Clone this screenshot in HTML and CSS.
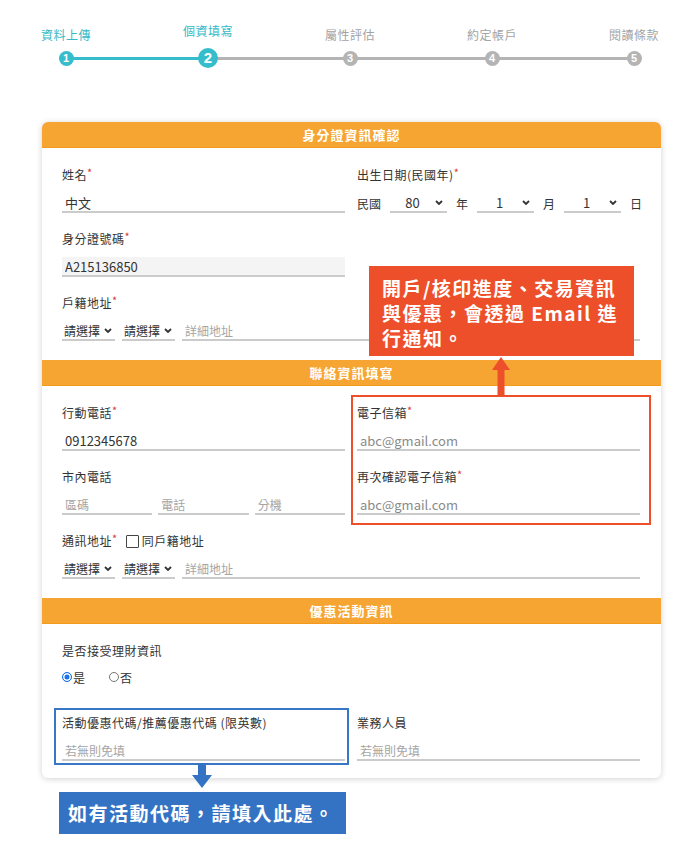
FILE: index.html
```html
<!DOCTYPE html>
<html>
<head>
    <meta charset="utf-8">
    <title>開戶 - 個資填寫</title>
    <link rel="stylesheet" href="styles.css">
</head>
<body>
    <div class="stepper">
        <div class="step-labels">
            <span class="done">資料上傳</span>
            <span class="done current">個資填寫</span>
            <span>屬性評估</span>
            <span>約定帳戶</span>
            <span>閱讀條款</span>
        </div>
        <div class="step-dots">
            <span class="dot-box"><span class="dot done">1</span></span>
            <span class="dot-box"><span class="dot done current">2</span></span>
            <span class="dot-box"><span class="dot">3</span></span>
            <span class="dot-box"><span class="dot">4</span></span>
            <span class="dot-box"><span class="dot">5</span></span>
        </div>
    </div>

    <div class="card">
        <div class="sec-head first">身分證資訊確認</div>
        <div class="sec-body">
            <div class="row">
                <div class="field">
                    <div class="label">姓名<span class="req">*</span></div>
                    <div class="ctl"><input class="input" value="中文"></div>
                </div>
                <div class="field">
                    <div class="label">出生日期(民國年)<span class="req">*</span></div>
                    <div class="ctl date-row">
                        <span>民國</span>
                        <div class="select date"><span class="sel-text">80</span><svg width="8" height="5" viewBox="0 0 8 5"><polyline points="1,1 4,4 7,1" fill="none" stroke="#333" stroke-width="1.8"/></svg></div>
                        <span>年</span>
                        <div class="select date"><span class="sel-text">1</span><svg width="8" height="5" viewBox="0 0 8 5"><polyline points="1,1 4,4 7,1" fill="none" stroke="#333" stroke-width="1.8"/></svg></div>
                        <span>月</span>
                        <div class="select date"><span class="sel-text">1</span><svg width="8" height="5" viewBox="0 0 8 5"><polyline points="1,1 4,4 7,1" fill="none" stroke="#333" stroke-width="1.8"/></svg></div>
                        <span>日</span>
                    </div>
                </div>
            </div>
            <div class="row">
                <div class="field">
                    <div class="label">身分證號碼<span class="req">*</span></div>
                    <div class="ctl"><input class="input readonly" value="A215136850" readonly></div>
                </div>
            </div>
            <div class="field">
                <div class="label">戶籍地址<span class="req">*</span></div>
                <div class="ctl">
                    <div class="select addr">請選擇<svg width="8" height="5" viewBox="0 0 8 5"><polyline points="1,1 4,4 7,1" fill="none" stroke="#333" stroke-width="1.8"/></svg></div>
                    <div class="select addr">請選擇<svg width="8" height="5" viewBox="0 0 8 5"><polyline points="1,1 4,4 7,1" fill="none" stroke="#333" stroke-width="1.8"/></svg></div>
                    <input class="input" placeholder="詳細地址">
                </div>
            </div>
        </div>

        <div class="sec-head">聯絡資訊填寫</div>
        <div class="sec-body">
            <div class="row">
                <div class="stack">
                    <div class="field">
                        <div class="label">行動電話<span class="req">*</span></div>
                        <div class="ctl"><input class="input" value="0912345678"></div>
                    </div>
                    <div class="field">
                        <div class="label">市內電話</div>
                        <div class="ctl phone">
                            <input class="input" placeholder="區碼">
                            <input class="input" placeholder="電話">
                            <input class="input" placeholder="分機">
                        </div>
                    </div>
                </div>
                <div class="stack hl-red">
                    <svg class="arrow-red" width="18" height="40" viewBox="0 0 18 40"><polygon points="9,0 18,13 12.5,13 12.5,40 5.5,40 5.5,13 0,13" fill="#ee4f2b"/></svg>
                    <div class="field">
                        <div class="label">電子信箱<span class="req">*</span></div>
                        <div class="ctl"><input class="input ph-dark" placeholder="abc@gmail.com"></div>
                    </div>
                    <div class="field">
                        <div class="label">再次確認電子信箱<span class="req">*</span></div>
                        <div class="ctl"><input class="input ph-dark" placeholder="abc@gmail.com"></div>
                    </div>
                </div>
            </div>
            <div class="field">
                <div class="label">通訊地址<span class="req">*</span><span class="check"></span>同戶籍地址</div>
                <div class="ctl">
                    <div class="select addr">請選擇<svg width="8" height="5" viewBox="0 0 8 5"><polyline points="1,1 4,4 7,1" fill="none" stroke="#333" stroke-width="1.8"/></svg></div>
                    <div class="select addr">請選擇<svg width="8" height="5" viewBox="0 0 8 5"><polyline points="1,1 4,4 7,1" fill="none" stroke="#333" stroke-width="1.8"/></svg></div>
                    <input class="input" placeholder="詳細地址">
                </div>
            </div>
        </div>

        <div class="sec-head">優惠活動資訊</div>
        <div class="sec-body promo">
            <div class="field">
                <div class="label">是否接受理財資訊</div>
                <div class="radio-row">
                    <span class="radio-opt"><span class="radio on"></span>是</span>
                    <span class="radio-opt"><span class="radio"></span>否</span>
                </div>
            </div>
            <div class="row">
                <div class="field hl-blue">
                    <div class="label">活動優惠代碼/推薦優惠代碼 (限英數)</div>
                    <div class="ctl"><input class="input" placeholder="若無則免填"></div>
                    <svg class="arrow-blue" width="20" height="25" viewBox="0 0 20 25"><polygon points="6,0 14,0 14,12 20,12 10,25 0,12 6,12" fill="#3473c3"/></svg>
                </div>
                <div class="field">
                    <div class="label">業務人員</div>
                    <div class="ctl"><input class="input" placeholder="若無則免填"></div>
                </div>
            </div>
        </div>

        <div class="note-red">開戶/核印進度、交易資訊<br>與優惠，會透過 Email 進<br>行通知。</div>
    </div>

    <div class="note-blue">如有活動代碼，請填入此處。</div>
</body>
</html>
```

FILE: styles.css
```css
body {
    margin: 0;
    background: #fff;
    color: #333;
    font-family: "Noto Sans CJK TC", "Noto Sans", sans-serif;
}

/* steps */
.stepper {
    margin-left: 36px;
    width: 628px;
    padding-top: 28px;
}
.step-labels {
    display: flex;
    justify-content: space-between;
    align-items: flex-end;
    height: 14px;
}
.step-labels span {
    width: 60px;
    text-align: center;
    font-size: 12px;
    line-height: 14px;
    letter-spacing: 0.5px;
    color: #a3a3a3;
}
.step-labels span.done {
    color: #35b9c7;
}
.step-labels span.current {
    margin-bottom: 4px;
}
.step-dots {
    display: flex;
    justify-content: space-between;
    margin: 6px 20px 0;
    height: 20px;
    background: linear-gradient(to right, #35bdcb 25%, #b4b4b4 25%) no-repeat center / calc(100% - 20px) 3px;
}
.dot-box {
    width: 20px;
    height: 20px;
    display: flex;
    align-items: center;
    justify-content: center;
}
.dot {
    width: 15px;
    height: 15px;
    border-radius: 50%;
    background: #b4b4b4;
    color: #fff;
    font: bold 11px/15px "Liberation Sans", sans-serif;
    text-align: center;
}
.dot.done {
    background: #35bdcb;
}
.dot.current {
    width: 20px;
    height: 20px;
    font-size: 15px;
    line-height: 20px;
}

/* card */
.card {
    position: relative;
    margin: 54px 0 0 42px;
    width: 619px;
    background: #fff;
    border-radius: 6px;
    box-shadow: 0 1px 6px rgba(0, 0, 0, 0.18);
}
.sec-head {
    height: 26px;
    line-height: 26px;
    background: #f7a532;
    border-bottom: 1px solid #f39a1c;
    box-sizing: border-box;
    color: #fff;
    font-size: 13px;
    font-weight: bold;
    letter-spacing: 1px;
    text-align: center;
}
.sec-head.first {
    border-radius: 6px 6px 0 0;
}
.sec-body {
    display: flex;
    flex-direction: column;
    gap: 16px;
    padding: 17px 21px 19px 20px;
}
.sec-body.promo {
    gap: 27px;
    padding-bottom: 17px;
}
.row {
    display: grid;
    grid-template-columns: minmax(0, 1fr) minmax(0, 1fr);
    column-gap: 12px;
}
.stack {
    display: flex;
    flex-direction: column;
    gap: 16px;
}
.label {
    display: flex;
    align-items: center;
    height: 18px;
    padding-top: 2px;
    box-sizing: border-box;
    font-size: 12px;
    line-height: 16px;
    letter-spacing: 0.5px;
    white-space: nowrap;
}
.req {
    align-self: flex-start;
    color: #d23c3c;
    font-size: 11px;
    line-height: 11px;
}
.check {
    width: 13px;
    height: 13px;
    box-sizing: border-box;
    border: 1.5px solid #444;
    border-radius: 1px;
    margin: 0 3px 0 8px;
}
.ctl {
    display: flex;
    align-items: center;
    gap: 7px;
    height: 20px;
    margin-top: 10px;
    font-size: 12px;
    white-space: nowrap;
}
.ctl.phone {
    gap: 6px;
}
.ctl.date-row {
    gap: 9px;
}
.input {
    flex: 1;
    width: 0;
    min-width: 0;
    height: 20px;
    box-sizing: border-box;
    padding: 0 3px;
    border: 0;
    border-bottom: 2px solid #cbcbcb;
    background: transparent;
    color: #333;
    font: 13px/18px "Noto Sans CJK TC", "Noto Sans", sans-serif;
    outline: none;
}
.input::placeholder {
    color: #a5a5a5;
    font-size: 12px;
}
.input.ph-dark::placeholder {
    color: #8a8a8a;
    font-size: 13px;
}
.input.readonly {
    background: #f4f4f4;
}
.select {
    display: flex;
    align-items: center;
    flex-shrink: 0;
    height: 20px;
    box-sizing: border-box;
    border-bottom: 2px solid #cbcbcb;
    color: #333;
    font-size: 12px;
}
.select.addr {
    width: 53px;
    padding-left: 2px;
    gap: 4px;
}
.select.date {
    width: 57px;
    font-size: 13px;
}
.select.date .sel-text {
    flex: 1;
    text-align: center;
}
.select.date svg {
    margin-right: 4px;
}

/* radios */
.radio-row {
    display: flex;
    align-items: center;
    gap: 24px;
    height: 18px;
    margin-top: 9px;
    font-size: 12px;
}
.radio-opt {
    display: flex;
    align-items: center;
}
.radio {
    width: 10px;
    height: 10px;
    box-sizing: border-box;
    border: 1px solid #767676;
    border-radius: 50%;
    margin-right: 1px;
}
.radio.on {
    border-color: #1a73e8;
    background: #1a73e8;
    box-shadow: inset 0 0 0 1.5px #fff;
}

/* annotations */
.hl-red {
    position: relative;
    border: 2px solid #ee4f2b;
    margin: -8px -11px -10px -6px;
    padding: 6px 9px 8px 4px;
}
.arrow-red {
    position: absolute;
    left: 139px;
    bottom: 100%;
    display: block;
}
.note-red {
    position: absolute;
    left: 327px;
    top: 144px;
    z-index: 2;
    width: 265px;
    height: 90px;
    box-sizing: border-box;
    padding: 9px 0 0 13px;
    background: #ee4f2b;
    color: #fff;
    font-size: 19px;
    font-weight: bold;
    line-height: 25px;
    letter-spacing: 1.5px;
    white-space: nowrap;
}
.hl-blue {
    position: relative;
    border: 2px solid #3877c6;
    margin: -5px -4px -4px -8px;
    padding: 3px 2px 2px 6px;
}
.arrow-blue {
    position: absolute;
    top: 100%;
    left: 136px;
    display: block;
}
.note-blue {
    margin: 14px 0 0 59px;
    width: 287px;
    height: 42px;
    box-sizing: border-box;
    padding-left: 9px;
    background: #3473c3;
    color: #fff;
    font-size: 19px;
    font-weight: bold;
    line-height: 42px;
    letter-spacing: 1.5px;
    white-space: nowrap;
}
```
